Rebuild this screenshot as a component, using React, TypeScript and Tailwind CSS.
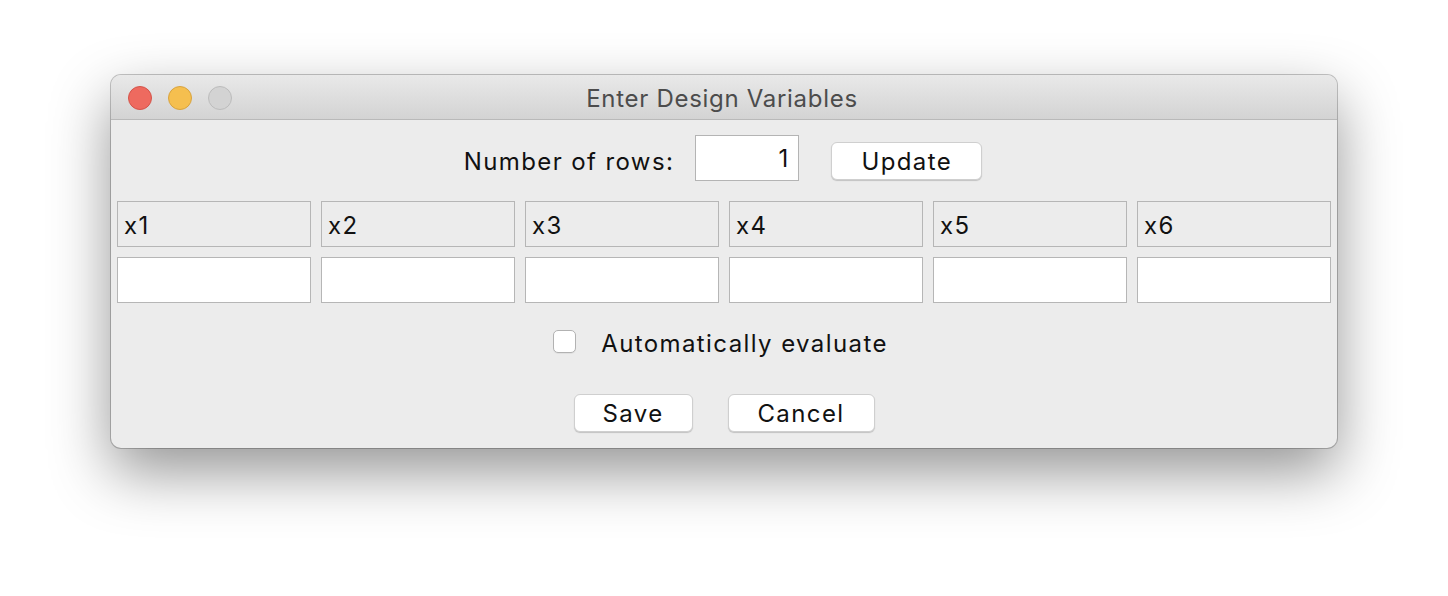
import React from "react";

const font = { fontFamily: "Inter, 'Noto Sans', sans-serif" };

function MacButton({ label, width }: { label: string; width: string }) {
  return (
    <button
      className={`${width} h-[38px] rounded-[6px] bg-white border border-[#cfcfcf] shadow-[0_1px_1px_rgba(0,0,0,0.18)] text-[24px] tracking-[1.4px] text-[#111] flex items-center justify-center pt-[1px]`}
    >
      {label}
    </button>
  );
}

export default function App() {
  const cols = ["x1", "x2", "x3", "x4", "x5", "x6"];

  return (
    <div className="w-[1448px] h-[596px] bg-white pt-[75px] pl-[111px]" style={font}>
      <div className="w-[1226px] h-[373px] rounded-[10px] bg-[#ececec] overflow-hidden shadow-[0_0_0_1px_rgba(0,0,0,0.22),0_24px_60px_rgba(0,0,0,0.42)] flex flex-col">
        {/* Title bar */}
        <div className="h-[45px] shrink-0 relative flex items-center justify-center pt-[3px] pr-[4px] bg-gradient-to-b from-[#e9e9e9] to-[#d3d3d3] border-b border-[#b9b9b9]">
          <div className="absolute left-[17px] top-[11px] flex gap-[16px]">
            <span className="w-[24px] h-[24px] rounded-full bg-[#ee6a5f] border border-[#d4544a]" />
            <span className="w-[24px] h-[24px] rounded-full bg-[#f5bf4f] border border-[#d8a33f]" />
            <span className="w-[24px] h-[24px] rounded-full bg-[#d3d3d3] border border-[#bcbcbc]" />
          </div>
          <span className="text-[24px] text-[#4c4c4c] tracking-[0.7px]">Enter Design Variables</span>
        </div>

        {/* Number of rows */}
        <div className="mt-[15px] h-[46px] flex items-start justify-center pr-[2px]">
          <span className="mt-[12px] text-[24px] tracking-[1.4px] leading-[30px] text-[#111]">Number of rows:</span>
          <div className="ml-[21px] w-[104px] h-[46px] bg-white border border-[#b4b4b4] flex items-center justify-end pr-[10px] pt-[1px] text-[24px] text-[#111]">
            1
          </div>
          <div className="ml-[32px] mt-[7px]">
            <MacButton label="Update" width="w-[151px]" />
          </div>
        </div>

        {/* Variables grid */}
        <div className="mt-[20px] px-[6px] grid grid-cols-6 gap-x-[10px] gap-y-[10px]">
          {cols.map((c) => (
            <div
              key={c}
              className="h-[46px] border border-[#b6b6b6] bg-[#ececec] flex items-center pl-[6px] pt-[4px] text-[24px] tracking-[1.4px] text-[#111]"
            >
              {c}
            </div>
          ))}
          {cols.map((c) => (
            <div key={c + "-in"} className="h-[46px] border border-[#b6b6b6] bg-white" />
          ))}
        </div>

        {/* Checkbox */}
        <div className="mt-[26px] h-[24px] flex items-center justify-center pr-[7px]">
          <span className="w-[23px] h-[23px] rounded-[5px] bg-white border border-[#b2b2b2] shadow-[0_1px_0_rgba(0,0,0,0.05)]" />
          <span className="ml-[25px] mt-[5px] text-[24px] tracking-[1.4px] text-[#111]">Automatically evaluate</span>
        </div>

        {/* Buttons */}
        <div className="mt-[41px] flex justify-center gap-[35px]">
          <MacButton label="Save" width="w-[119px]" />
          <MacButton label="Cancel" width="w-[147px]" />
        </div>
      </div>
    </div>
  );
}
